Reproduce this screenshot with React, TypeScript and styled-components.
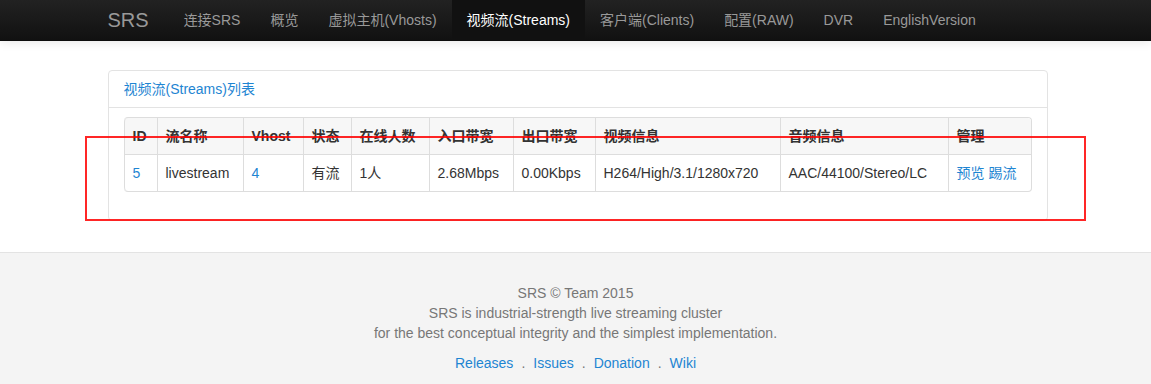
import React from "react";
import styled, { createGlobalStyle } from "styled-components";

const GlobalStyle = createGlobalStyle`
  html, body {
    margin: 0;
    padding: 0;
    background: #fff;
  }
  body {
    font-family: "Liberation Sans", Arial, "Noto Sans CJK SC", sans-serif;
    font-size: 14px;
    line-height: 20px;
    color: #333;
  }
`;

const Page = styled.div`
  position: relative;
  min-height: 384px;
  display: flex;
  flex-direction: column;
`;

const Container = styled.div`
  width: 940px;
  margin-left: calc(50% - 468px);
`;

const Navbar = styled.div`
  height: 40px;
  background-image: linear-gradient(to bottom, #222 0%, #111 100%);
  border-bottom: 1px solid #0d0d0d;
  box-shadow: 0 1px 10px rgba(0, 0, 0, 0.1);
`;

const NavInner = styled(Container)`
  display: flex;
  align-items: stretch;
  height: 40px;
`;

const Brand = styled.a`
  display: flex;
  align-items: center;
  margin-left: -20px;
  padding: 0 20px;
  font-size: 20px;
  font-weight: 200;
  color: #999;
  text-decoration: none;
`;

const NavItem = styled.a<{ $active?: boolean }>`
  display: flex;
  align-items: center;
  padding: 0 15px;
  color: ${(p) => (p.$active ? "#fff" : "#999")};
  background: ${(p) => (p.$active ? "#111" : "transparent")};
  text-decoration: none;
  white-space: nowrap;
`;

const Main = styled(Container)`
  padding-top: 29px;
  padding-bottom: 31px;
`;

const Panel = styled.div`
  border: 1px solid #e3e3e3;
  border-radius: 4px;
  background: #fff;
`;

const PanelHeading = styled.div`
  padding: 10px 15px;
  line-height: 16px;
  border-bottom: 1px solid #e3e3e3;
  color: #1e85d2;
`;

const PanelBody = styled.div`
  padding: 9px 15px 28px;
`;

const Table = styled.table`
  width: 907px;
  table-layout: fixed;
  border-collapse: separate;
  border-spacing: 0;
  border: 1px solid #ddd;
  border-left: 0;
  border-radius: 4px;
`;

const Th = styled.th`
  text-align: left;
  font-weight: bold;
  padding: 8px;
  line-height: 20px;
  background: #f7f7f7;
  border-left: 1px solid #ddd;
  white-space: nowrap;
  &:first-child { border-top-left-radius: 4px; }
  &:last-child { border-top-right-radius: 4px; }
`;

const Td = styled.td`
  padding: 8px;
  line-height: 20px;
  border-left: 1px solid #ddd;
  border-top: 1px solid #ddd;
  white-space: nowrap;
  &:first-child { border-bottom-left-radius: 4px; }
  &:last-child { border-bottom-right-radius: 4px; }
`;

const Link = styled.a`
  color: #1e85d2;
  text-decoration: none;
`;

const Footer = styled.div`
  flex: 1;
  background: #f4f4f4;
  border-top: 1px solid #e3e3e3;
  padding: 30px 0 10px;
  text-align: center;
  color: #777;
`;

const FooterText = styled.p`
  margin: 0 0 10px;
`;

const Dot = styled.span`
  color: #777;
  margin: 0 8px;
`;

const Highlight = styled.div`
  position: absolute;
  left: 85px;
  top: 136px;
  width: 997px;
  height: 81px;
  border: 2px solid rgba(255, 0, 0, 0.85);
  pointer-events: none;
`;

const columns = [
  { title: "ID", width: 33 },
  { title: "流名称", width: 86 },
  { title: "Vhost", width: 60 },
  { title: "状态", width: 48 },
  { title: "在线人数", width: 78 },
  { title: "入口带宽", width: 84 },
  { title: "出口带宽", width: 82 },
  { title: "视频信息", width: 185 },
  { title: "音频信息", width: 168 },
  { title: "管理", width: 83 },
];

const navItems = [
  "连接SRS",
  "概览",
  "虚拟主机(Vhosts)",
  "视频流(Streams)",
  "客户端(Clients)",
  "配置(RAW)",
  "DVR",
  "EnglishVersion",
];

const App: React.FC = () => {
  return (
    <Page>
      <GlobalStyle />
      <Navbar>
        <NavInner>
          <Brand>SRS</Brand>
          {navItems.map((item) => (
            <NavItem key={item} $active={item === "视频流(Streams)"}>
              {item}
            </NavItem>
          ))}
        </NavInner>
      </Navbar>

      <Main>
        <Panel>
          <PanelHeading>视频流(Streams)列表</PanelHeading>
          <PanelBody>
            <Table>
              <colgroup>
                {columns.map((c) => (
                  <col key={c.title} style={{ width: c.width }} />
                ))}
              </colgroup>
              <thead>
                <tr>
                  {columns.map((c) => (
                    <Th key={c.title}>{c.title}</Th>
                  ))}
                </tr>
              </thead>
              <tbody>
                <tr>
                  <Td><Link>5</Link></Td>
                  <Td>livestream</Td>
                  <Td><Link>4</Link></Td>
                  <Td>有流</Td>
                  <Td>1人</Td>
                  <Td>2.68Mbps</Td>
                  <Td>0.00Kbps</Td>
                  <Td>H264/High/3.1/1280x720</Td>
                  <Td>AAC/44100/Stereo/LC</Td>
                  <Td>
                    <Link>预览</Link> <Link>踢流</Link>
                  </Td>
                </tr>
              </tbody>
            </Table>
          </PanelBody>
        </Panel>
      </Main>

      <Footer>
        <FooterText>
          SRS © Team 2015
          <br />
          SRS is industrial-strength live streaming cluster
          <br />
          for the best conceptual integrity and the simplest implementation.
        </FooterText>
        <FooterText>
          <Link>Releases</Link>
          <Dot>.</Dot>
          <Link>Issues</Link>
          <Dot>.</Dot>
          <Link>Donation</Link>
          <Dot>.</Dot>
          <Link>Wiki</Link>
        </FooterText>
      </Footer>

      <Highlight />
    </Page>
  );
};

export default App;
